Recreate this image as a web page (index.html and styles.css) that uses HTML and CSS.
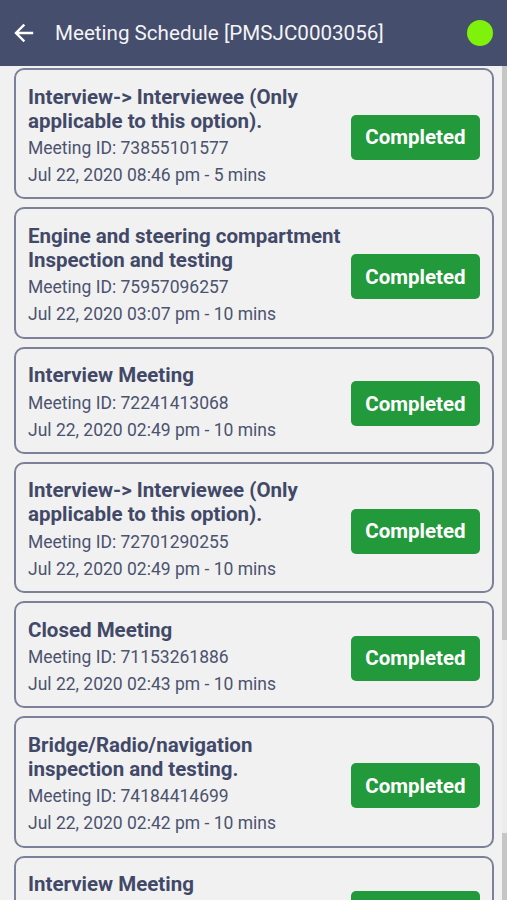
FILE: index.html
```html
<!DOCTYPE html>
<html lang="en">
<head>
    <meta charset="UTF-8">
    <meta name="viewport" content="width=device-width, initial-scale=1.0">
    <title>Meeting Schedule</title>
    <link rel="stylesheet" href="styles.css">
</head>
<body>
    <header class="app-bar">
        <svg class="back-icon" width="24" height="24" viewBox="0 0 24 24">
            <path d="M20 12H4.5M11.5 4.5L4 12l7.5 7.5" fill="none" stroke="#fff" stroke-width="2.4" stroke-linecap="square"/>
        </svg>
        <h1 class="app-title">Meeting Schedule [PMSJC0003056]</h1>
        <span class="status-dot"></span>
    </header>
    <div class="content">
        <div class="meeting-list">
            <div class="meeting-card">
                <div class="meeting-info">
                    <div class="meeting-title">Interview-&gt; Interviewee (Only applicable to this option).</div>
                    <div class="meeting-meta">Meeting ID: 73855101577</div>
                    <div class="meeting-meta">Jul 22, 2020 08:46 pm - 5 mins</div>
                </div>
                <button class="status-btn">Completed</button>
            </div>
            <div class="meeting-card">
                <div class="meeting-info">
                    <div class="meeting-title">Engine and steering compartment Inspection and testing</div>
                    <div class="meeting-meta">Meeting ID: 75957096257</div>
                    <div class="meeting-meta">Jul 22, 2020 03:07 pm - 10 mins</div>
                </div>
                <button class="status-btn">Completed</button>
            </div>
            <div class="meeting-card">
                <div class="meeting-info">
                    <div class="meeting-title">Interview Meeting</div>
                    <div class="meeting-meta">Meeting ID: 72241413068</div>
                    <div class="meeting-meta">Jul 22, 2020 02:49 pm - 10 mins</div>
                </div>
                <button class="status-btn">Completed</button>
            </div>
            <div class="meeting-card">
                <div class="meeting-info">
                    <div class="meeting-title">Interview-&gt; Interviewee (Only applicable to this option).</div>
                    <div class="meeting-meta">Meeting ID: 72701290255</div>
                    <div class="meeting-meta">Jul 22, 2020 02:49 pm - 10 mins</div>
                </div>
                <button class="status-btn">Completed</button>
            </div>
            <div class="meeting-card">
                <div class="meeting-info">
                    <div class="meeting-title">Closed Meeting</div>
                    <div class="meeting-meta">Meeting ID: 71153261886</div>
                    <div class="meeting-meta">Jul 22, 2020 02:43 pm - 10 mins</div>
                </div>
                <button class="status-btn">Completed</button>
            </div>
            <div class="meeting-card">
                <div class="meeting-info">
                    <div class="meeting-title">Bridge/Radio/navigation inspection and testing.</div>
                    <div class="meeting-meta">Meeting ID: 74184414699</div>
                    <div class="meeting-meta">Jul 22, 2020 02:42 pm - 10 mins</div>
                </div>
                <button class="status-btn">Completed</button>
            </div>
            <div class="meeting-card">
                <div class="meeting-info">
                    <div class="meeting-title">Interview Meeting</div>
                    <div class="meeting-meta">Meeting ID: 72241413068</div>
                    <div class="meeting-meta">Jul 22, 2020 02:39 pm - 10 mins</div>
                </div>
                <button class="status-btn">Completed</button>
            </div>
        </div>
        <div class="scroll-track"></div>
    </div>
</body>
</html>
```

FILE: styles.css
```css
body {
    margin: 0;
    height: 900px;
    overflow: hidden;
    font-family: Roboto, "Noto Sans", sans-serif;
    background-color: #f1f1f1;
}
.app-bar {
    display: flex;
    align-items: center;
    height: 66px;
    padding: 0 14px 0 12px;
    background-color: #454e6d;
    color: #f4f4f6;
}
.back-icon {
    flex-shrink: 0;
}
.app-title {
    flex: 1;
    margin: 0 0 0 19px;
    font-size: 20.6px;
    font-weight: 400;
}
.status-dot {
    width: 26px;
    height: 26px;
    border-radius: 50%;
    background-color: #7ef20a;
}
.content {
    display: flex;
    height: 834px;
}
.meeting-list {
    flex: 1;
    display: flex;
    flex-direction: column;
    gap: 8px;
    padding: 2px 8px 0 14px;
    overflow: hidden;
}
.meeting-card {
    flex-shrink: 0;
    display: flex;
    align-items: center;
    padding: 14.5px 12px 8.3px 12px;
    border: 2px solid #7c8098;
    border-radius: 10px;
}
.meeting-info {
    flex: 1;
    min-width: 0;
    color: #424968;
}
.meeting-title {
    margin-bottom: 2.5px;
    font-size: 20.5px;
    font-weight: 700;
    line-height: 24px;
    padding-right: 2px;
}
.meeting-meta {
    font-size: 17.5px;
    line-height: 27px;
    color: #4c536f;
    white-space: nowrap;
}
.status-btn {
    flex-shrink: 0;
    width: 129px;
    height: 45px;
    margin-top: 1px;
    padding: 0;
    font-family: Roboto, sans-serif;
    font-size: 20.5px;
    font-weight: 700;
    color: #fff;
    background-color: #22993a;
    border: none;
    border-radius: 5px;
}
.scroll-track {
    width: 5px;
    background: linear-gradient(#c6c6c6 0, #c6c6c6 574px, #ececec 574px, #ececec 767px, #c6c6c6 767px);
}
```
